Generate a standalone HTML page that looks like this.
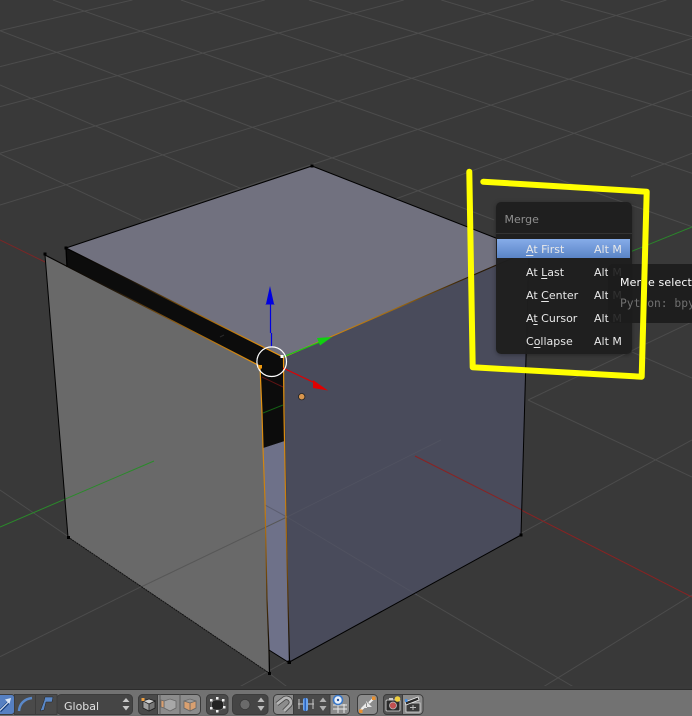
<!DOCTYPE html>
<html><head><meta charset="utf-8"><style>
html,body{margin:0;padding:0;width:692px;height:716px;overflow:hidden;background:#393939}
#w{position:relative;width:692px;height:716px;overflow:hidden}
svg{position:absolute;left:0;top:0}
.menu{position:absolute;left:495.5px;top:202px;width:136px;height:152px;background:rgba(30,30,30,.96);border-radius:5px;box-shadow:0 1px 5px rgba(0,0,0,.35);font:11px "DejaVu Sans",sans-serif;color:#e8e8e8}
.menu div{position:absolute;white-space:pre;line-height:14px}
.menu u{text-underline-offset:2px}
.hl{left:1.5px;top:36.5px;width:133px;height:19px;background:linear-gradient(#86ace9,#5a84c6)}
.sep{left:0;top:31px;width:136px;height:1px;background:#333}
.tip{position:absolute;left:607.5px;top:263.5px;width:100px;height:59px;background:rgba(28,28,28,.9);border-radius:5px;font:11px "DejaVu Sans",sans-serif;color:#fff;overflow:hidden}
.tip div{position:absolute;white-space:pre;line-height:14px}
</style></head><body><div id="w">
<svg width="692" height="716" viewBox="0 0 692 716">
<defs>
<linearGradient id="o1" gradientUnits="userSpaceOnUse" x1="66" y1="248" x2="283" y2="357"><stop offset="0" stop-color="#000"/><stop offset=".3" stop-color="#1a1206"/><stop offset=".6" stop-color="#9a6410"/><stop offset="1" stop-color="#f09a10"/></linearGradient>
<linearGradient id="o3" gradientUnits="userSpaceOnUse" x1="284" y1="357" x2="470" y2="272"><stop offset="0" stop-color="#f09a10"/><stop offset=".6" stop-color="#a06a10"/><stop offset="1" stop-color="#2a1a05"/></linearGradient>
<linearGradient id="o4" gradientUnits="userSpaceOnUse" x1="0" y1="357" x2="0" y2="662"><stop offset="0" stop-color="#f09a10"/><stop offset=".5" stop-color="#c47c10"/><stop offset=".85" stop-color="#3a2508"/><stop offset="1" stop-color="#000"/></linearGradient>
<linearGradient id="o5" gradientUnits="userSpaceOnUse" x1="45" y1="255" x2="260" y2="366"><stop offset="0" stop-color="#000"/><stop offset=".3" stop-color="#1a1208"/><stop offset=".6" stop-color="#8a5a14"/><stop offset="1" stop-color="#e89510"/></linearGradient>
</defs>
<rect width="692" height="716" fill="#393939"/>
<g transform="scale(.4413,.3333)" fill="none" stroke="#4c4c4c" stroke-width="1">
<path vector-effect="non-scaling-stroke" d="M0 92L300 0M0 200L600 0M0 320L915 0M0 460L1210 0M0 615L1510 0M320 664L1568 115M890 600L1568 270M1430 530L1568 460M0 92L1120 660M120 0L1568 680M410 0L1568 520M700 0L1568 350M1000 0L1568 225M1270 0L1568 110M0 255L545 565M0 462L320 660"/>
</g>
<g transform="translate(0,440) scale(.4413,.3333)" fill="none" stroke="#4c4c4c" stroke-width="1">
<path vector-effect="non-scaling-stroke" d="M1568 0L530 750M1220 750L1568 465M945 465L1350 780M610 700L660 750M0 150L155 290M0 650L320 440"/>
</g>
<path d="M528 400L692 477M528 400L692 322M632 352L692 378" stroke="#4c4c4c" fill="none"/>
<path d="M0 240L45 262" stroke="#7a2626" stroke-width="1"/>
<path d="M630 252L692 227" stroke="#2a862a" stroke-width="1"/>
<path d="M415 456L692 597" stroke="#8a2222" stroke-width="1"/>

<!-- faces -->
<polygon points="312,166 66,248 283,357 529,251" fill="#71717f"/>
<polygon points="263,448 284.5,441 289,662 269,650" fill="#6e7189"/>
<polygon points="66,248 283,357 283.5,413 284.5,441 263,448 262,413 260,366 67,267" fill="#0c0c0c"/>
<polygon points="45,255 260,366 262,413 265,500 267,600 269,673 68,537" fill="#696969"/>
<polygon points="284,357 529,251 521,535 289.5,662" fill="#494b5b"/>

<!-- lines on faces -->
<path d="M0 527L154 461" stroke="#2a8a2a" stroke-width="1" fill="none"/>
<path d="M415 456L522 510" stroke="#8a2222" stroke-width="1" fill="none"/>
<path d="M141 587L287 517" stroke="#575757" fill="none"/>
<path d="M287 517L441 440" stroke="#505260" fill="none"/>
<path d="M265 505L287 517" stroke="#5c5e70" fill="none"/>
<path d="M287 517L417 595" stroke="#505260" fill="none"/>
<path d="M262 377L283 387" stroke="#5e1414" fill="none"/>
<path d="M263 413L283 405" stroke="#155e15" fill="none"/>
<path d="M220 337L224 335" stroke="#2a2a2a" fill="none"/>

<!-- edges -->
<path d="M312 166L66 248" stroke="#000" fill="none"/>
<path d="M312 166L529 251" stroke="#000" fill="none"/>
<path d="M66 248L67 267" stroke="#000" stroke-width="1.3"/>
<path d="M66 248L283 357" stroke="url(#o1)" stroke-width="1.2" fill="none"/>
<path d="M45 255L260 366" stroke="url(#o5)" stroke-width="1.2" fill="none"/>
<path d="M45 255L68 537" stroke="#000" fill="none"/>
<path d="M284 357L529 251" stroke="url(#o3)" stroke-width="1.1" fill="none"/>
<path d="M529 251L521 535" stroke="#000" fill="none"/>
<path d="M521 535L289.5 662" stroke="#000" fill="none"/>
<path d="M68 537L269 673" stroke="#111" stroke-dasharray="2 .6" fill="none"/>
<path d="M260 366L262 413L263 448L265 500L267 600L269 650L269.5 673" stroke="url(#o4)" stroke-width="1.2" fill="none"/>
<path d="M283.5 357L284 413L284.5 441L286 520L288 600L289.5 662" stroke="url(#o4)" stroke-width="1.2" fill="none"/>
<path d="M269 650L289.5 663" stroke="#000" fill="none"/>
<rect x="287.5" y="660.5" width="3.5" height="3.5" fill="#000"/>
<rect x="268" y="672" width="3" height="3" fill="#000"/>
<rect x="310.5" y="164.5" width="3" height="3" fill="#000"/>
<rect x="64.500" y="246.500" width="3" height="3" fill="#000"/>
<rect x="43.500" y="252.500" width="3" height="3" fill="#000"/>
<rect x="67" y="536" width="3" height="3" fill="#000"/>
<rect x="519.500" y="533.500" width="3" height="3" fill="#000"/>

<!-- manipulator -->
<path d="M270.500 303V333M271.500 333V347" stroke="#0000e0" stroke-width="1.200" fill="none"/>
<polygon points="270,286 266,304 265,304.500 275,304.500 274,304" fill="#0000e0"/>
<path d="M284 356.500L320 342" stroke="#10d010" stroke-width="1.200" fill="none"/>
<polygon points="317,338 332,337 320,345.500" fill="#10d010"/>
<path d="M283 368L315 383" stroke="#e00000" stroke-width="1.200" fill="none"/>
<polygon points="313,380 328,390.500 313,388" fill="#e00000"/>
<circle cx="271.700" cy="361.700" r="14.800" fill="none" stroke="#fff" stroke-width="1.200"/>
<rect x="280.500" y="355" width="3" height="3" fill="#fff"/>
<rect x="258.500" y="365" width="3.500" height="3.500" fill="#f09a10"/>
<circle cx="301.700" cy="396.700" r="3.200" fill="#d9964e" stroke="#222" stroke-width=".8"/>
</svg>

<div class="menu">
<div style="left:9px;top:11px;color:#8f8f8f">Merge</div>
<div class="sep"></div>
<div class="hl"></div>
<div style="left:30.500px;top:40.500px"><u>A</u>t First</div><div style="left:98.500px;top:40.500px">Alt M</div>
<div style="left:30.500px;top:63.500px">At <u>L</u>ast</div><div style="left:98.500px;top:63.500px">Alt M</div>
<div style="left:30.500px;top:86.500px">At <u>C</u>enter</div><div style="left:98.500px;top:86.500px">Alt M</div>
<div style="left:30.500px;top:109.500px">A<u>t</u> Cursor</div><div style="left:98.500px;top:109.500px">Alt M</div>
<div style="left:30.500px;top:132.500px">C<u>o</u>llapse</div><div style="left:98.500px;top:132.500px">Alt M</div>
</div>
<div class="tip">
<div style="left:12.500px;top:12.500px;letter-spacing:.12px">Merge selected vertices</div>
<div style="left:12.500px;top:33.500px;font:11.300px/14px 'DejaVu Sans Mono',monospace;color:#707070">Python: bpy.ops.mesh.merge()</div>
</div>

<svg width="692" height="716" viewBox="0 0 692 716">
<path d="M469.300 171.700L472.700 367.300L641.700 376.700L646.700 191.700L483.300 181.700" fill="none" stroke="#ffff00" stroke-width="6" stroke-linecap="round" stroke-linejoin="round"/>

<!-- toolbar -->
<rect x="0" y="686" width="692" height="4" fill="#3a3a3a"/>
<rect x="0" y="689" width="692" height="1" fill="#2c2c2c"/>
<rect x="0" y="690" width="692" height="26" fill="#727272"/>
<g stroke="#3c3c3c" stroke-width="1">
<rect x="-4" y="694.500" width="18.500" height="20" rx="3" fill="#5680c2"/>
<rect x="14.500" y="694.500" width="21" height="20" fill="#4a4a4a"/>
<rect x="35.500" y="694.500" width="21.500" height="20" fill="#4a4a4a"/>
<rect x="57" y="694.500" width="75.500" height="20" rx="4" fill="#454545"/>
<rect x="138.500" y="694.500" width="62" height="20" rx="4" fill="#8c8c8c"/>
<path d="M157.500 694.500H143a4.500 4.500 0 0 0-4.500 4.500V710a4.500 4.500 0 0 0 4.500 4.500H157.500Z" fill="#4a4a4a"/>
<rect x="206.500" y="694.500" width="21.500" height="20" rx="4" fill="#4a4a4a"/>
<rect x="232.500" y="694.500" width="35.500" height="20" rx="4" fill="#454545"/>
<rect x="273.500" y="694.500" width="76" height="20" rx="4" fill="#8c8c8c"/>
<path d="M293.500 694.500H330V714.500H293.500Z" fill="#4a4a4a"/>
<rect x="357.500" y="694.500" width="20" height="20" rx="4" fill="#8c8c8c"/>
<rect x="383.500" y="694.500" width="39.500" height="20" rx="4" fill="#8c8c8c"/>
<path d="M402.500 694.500H387a3.500 3.500 0 0 0-3.500 3.500V711a3.500 3.500 0 0 0 3.500 3.500H402.500Z" fill="#555"/>
</g>
<!-- transform icons -->
<path d="M0 711L9 702" stroke="#123a78" stroke-width="3"/>
<path d="M0 710.500L9 701.500" stroke="#dbe6f5" stroke-width="1.200"/>
<polygon points="11,698 5,699.500 9.500,704" fill="#dbe6f5"/>
<path d="M19 711C19.500 704 24 699 32 698" fill="none" stroke="#5a88c8" stroke-width="2.500"/>
<path d="M40 711L44 710L46 702L52 702L53 697L45 697L44 701L41 709Z" fill="#5a88c8" stroke="#222" stroke-width=".5"/>
<text x="64" y="710" font-family="DejaVu Sans,sans-serif" font-size="11" fill="#e0e0e0">Global</text>
<polygon points="126,698 129.500,702 122.500,702" fill="#c8c8c8"/>
<polygon points="126,710.500 129.500,706 122.500,706" fill="#c8c8c8"/>
<!-- select mode -->
<g stroke="#222" stroke-width=".8">
<polygon points="149,699 155,701 155,708 149,711 143,708 143,701" fill="#a0a0a0"/>
<polygon points="149,704 155,701 155,708 149,711" fill="#777"/>
<polygon points="143,701 149,699 155,701 149,704" fill="#d0d0d0"/>
</g>
<rect x="141.500" y="698" width="3" height="3" fill="#f0a040"/>
<g stroke="#666" stroke-width=".8">
<polygon points="170,699 176,701 176,708 170,711 164,708 164,701" fill="#a8a8a8"/>
<polygon points="161,700 164,701 164,708 161,707" fill="#d9a070"/>
<polygon points="190,699 196,701 196,708 190,711 184,708 184,701" fill="#9c9c9c"/>
<polygon points="190,703 196,701 196,708 190,711" fill="#d9a070"/>
<polygon points="184,701 190,703 190,711 184,708" fill="#d9a070"/>
</g>
<path d="M180 694.500V714.500M160 694.500V714.500" stroke="#5a5a5a" fill="none"/>
<!-- proportional -->
<rect x="211.500" y="700" width="12" height="10" rx="4" fill="#222" stroke="#888" stroke-width=".6"/>
<g fill="#f0f0f0"><rect x="210" y="699" width="2.500" height="2.500"/><rect x="216" y="697" width="2.500" height="2.500"/><rect x="222" y="699" width="2.500" height="2.500"/><rect x="210" y="707" width="2.500" height="2.500"/><rect x="216" y="710" width="2.500" height="2.500"/><rect x="223" y="706" width="2.500" height="2.500"/></g>
<!-- pivot -->
<circle cx="245" cy="704.500" r="5" fill="#6a6a6a" stroke="#333" stroke-width=".6"/>
<polygon points="261,697.500 264.500,702 257.500,702" fill="#bdbdbd"/>
<polygon points="261,711 264.500,706 257.500,706" fill="#bdbdbd"/>
<!-- magnet -->
<path d="M277 704L284 698.500a4.500 4.500 0 0 1 6 6.500L284 711" fill="none" stroke="#444" stroke-width="4.400"/>
<path d="M277 704L284 698.500a4.500 4.500 0 0 1 6 6.500L284 711" fill="none" stroke="#b5b5b5" stroke-width="2.800"/>
<!-- snap -->
<path d="M299 699V709M313 699V709M298 704H314" stroke="#c8c8c8" stroke-width="1" fill="none"/>
<rect x="303" y="698" width="5" height="13" rx="2" fill="#6fa6ea"/>
<rect x="304.500" y="698" width="1.500" height="13" fill="#2a62c0"/>
<polygon points="323,697.500 326.500,702 319.500,702" fill="#b0b0b0"/>
<polygon points="323,711 326.500,706 319.500,706" fill="#b0b0b0"/>
<path d="M333 705H347M333 709H347M338 704V713M344 704V713" stroke="#e8e8e8" stroke-width="1" fill="none"/>
<circle cx="338" cy="700" r="4.500" fill="#e8f0fa" stroke="#3a78c8" stroke-width="1.600"/>
<circle cx="338" cy="700" r="1.200" fill="#1f4f9c"/>
<!-- manipulators snap target -->
<path d="M360 711L365 706M374 698L369 703" stroke="#f2f2f2" stroke-width="2" fill="none"/>
<path d="M366 701V707H372ZM367 708H361L367 702Z" fill="#e8e8e8"/>
<rect x="372" y="696.500" width="3.500" height="3.500" fill="#e89030"/>
<rect x="359" y="709.500" width="3.500" height="3.500" fill="#e89030"/>
<!-- camera -->
<rect x="386" y="700" width="14" height="11" rx="1" fill="#2b2b2b" stroke="#ddd" stroke-width=".8"/>
<circle cx="393" cy="705.500" r="3.500" fill="#c05050" stroke="#bbb" stroke-width=".8"/>
<rect x="389" y="698" width="4" height="2.500" fill="#ccc"/>
<circle cx="397.500" cy="699" r="2.800" fill="#f0d040"/>
<!-- clapper -->
<rect x="406" y="703" width="14" height="9" fill="#3a3a3a" stroke="#ddd" stroke-width=".8"/>
<path d="M405 702L418 697L419 700L406 705Z" fill="#2a2a2a" stroke="#eee" stroke-width=".8"/>
<rect x="405" y="699" width="2.500" height="3" fill="#4a90e0"/>
<path d="M410 707.500H416M413 705V710" stroke="#bbb" stroke-width="1"/>
</svg>
</div></body></html>
